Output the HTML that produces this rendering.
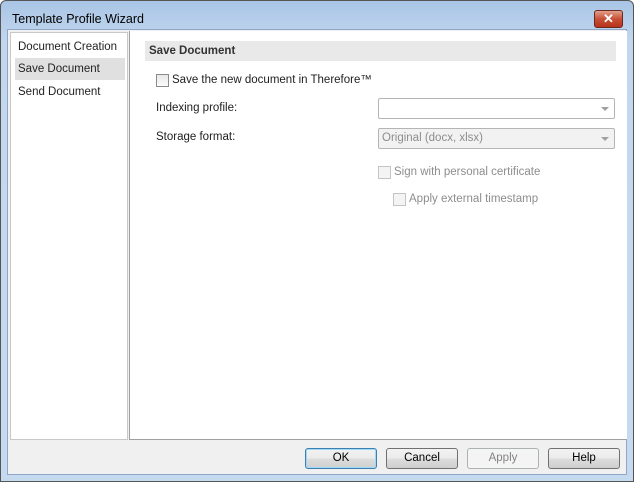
<!DOCTYPE html>
<html><head><style>
*{margin:0;padding:0;box-sizing:border-box}
body{width:634px;height:482px;overflow:hidden;font-family:"Liberation Sans",sans-serif;font-size:11.5px;color:#1e1e1e;background:#fff}
#win{position:absolute;left:0;top:0;width:634px;height:482px;border:1px solid #555;border-radius:6px 6px 0 0;background:linear-gradient(#a9c5e6,#c2d7ee 40px,#c6daef);}
#title{position:absolute;left:11px;top:11px;font-size:12.5px;color:#000}
#close{position:absolute;left:593px;top:9px;width:29px;height:18px;border:1px solid #6b2a20;border-radius:3px;background:linear-gradient(#e3a08c,#c75036 50%,#b8321b);color:#fff;font-weight:bold;font-size:13px;text-align:center;line-height:16px}
#client{position:absolute;left:6px;top:28px;width:620px;height:446px;background:#f0f0f0;border:1px solid #8ea7c4}
#left{position:absolute;left:2px;top:2px;width:118px;height:408px;background:#fff;border:1px solid #c8c8c8}
.nav{position:absolute;left:0;width:114px;height:22px;line-height:22px;padding-left:7px;color:#222}
#right{position:absolute;left:121px;top:1px;width:498px;height:409px;background:#fff;border-left:1px solid #a0a0a0;border-bottom:1px solid #a0a0a0}
#hdr{position:absolute;left:15px;top:10px;width:471px;height:20px;background:#e9e9e9;font-weight:bold;line-height:20px;padding-left:4px;color:#333}
.cb{position:absolute;width:13px;height:13px;border:1px solid #8a8a8a;background:linear-gradient(#e8e8e8,#fbfbfb)}
.cb.d{border-color:#c4c4c4;background:#f4f4f4}
.t{position:absolute;white-space:nowrap}
.g{color:#8d8d8d}
.combo{position:absolute;left:248px;width:237px;height:21px;border:1px solid #b5b5b5;border-radius:2px;background:#fff}
.combo::after{content:"";position:absolute;right:5px;top:8px;border:4px solid transparent;border-top:4px solid #a0a0a0}
.btn{position:absolute;top:418px;width:72px;height:21px;border:1px solid #707070;border-radius:3px;background:linear-gradient(#f2f2f2,#ebebeb 50%,#dddddd 51%,#cfcfcf);text-align:center;line-height:19px;color:#000}
</style></head><body>
<div id="win">
<div id="title">Template Profile Wizard</div>
<div id="close">✕</div>
<div id="client">
 <div id="left">
  <div class="nav" style="top:3px">Document Creation</div>
  <div class="nav" style="top:25px;left:4px;width:110px;padding-left:3px;background:#e0e0e0">Save Document</div>
  <div class="nav" style="top:48px">Send Document</div>
 </div>
 <div id="right">
  <div id="hdr">Save Document</div>
  <div class="cb" style="left:26px;top:43px"></div>
  <div class="t" style="left:42px;top:43px">Save the new document in Therefore™</div>
  <div class="t" style="left:26px;top:71px">Indexing profile:</div>
  <div class="combo" style="top:67px"></div>
  <div class="t" style="left:26px;top:100px">Storage format:</div>
  <div class="combo" style="top:97px;background:#f2f2f2"><span class="t g" style="left:3px;top:3px">Original (docx, xlsx)</span></div>
  <div class="cb d" style="left:248px;top:135px"></div>
  <div class="t g" style="left:264px;top:135px">Sign with personal certificate</div>
  <div class="cb d" style="left:263px;top:162px"></div>
  <div class="t g" style="left:279px;top:162px">Apply external timestamp</div>
 </div>
 <div class="btn" style="left:297px;border-color:#3c7fb1;box-shadow:inset 0 0 0 1px #9fd9f4">OK</div>
 <div class="btn" style="left:378px">Cancel</div>
 <div class="btn" style="left:459px;border-color:#adb2b5;background:#f4f4f4;color:#838383">Apply</div>
 <div class="btn" style="left:540px">Help</div>
</div>
</div>
</body></html>
